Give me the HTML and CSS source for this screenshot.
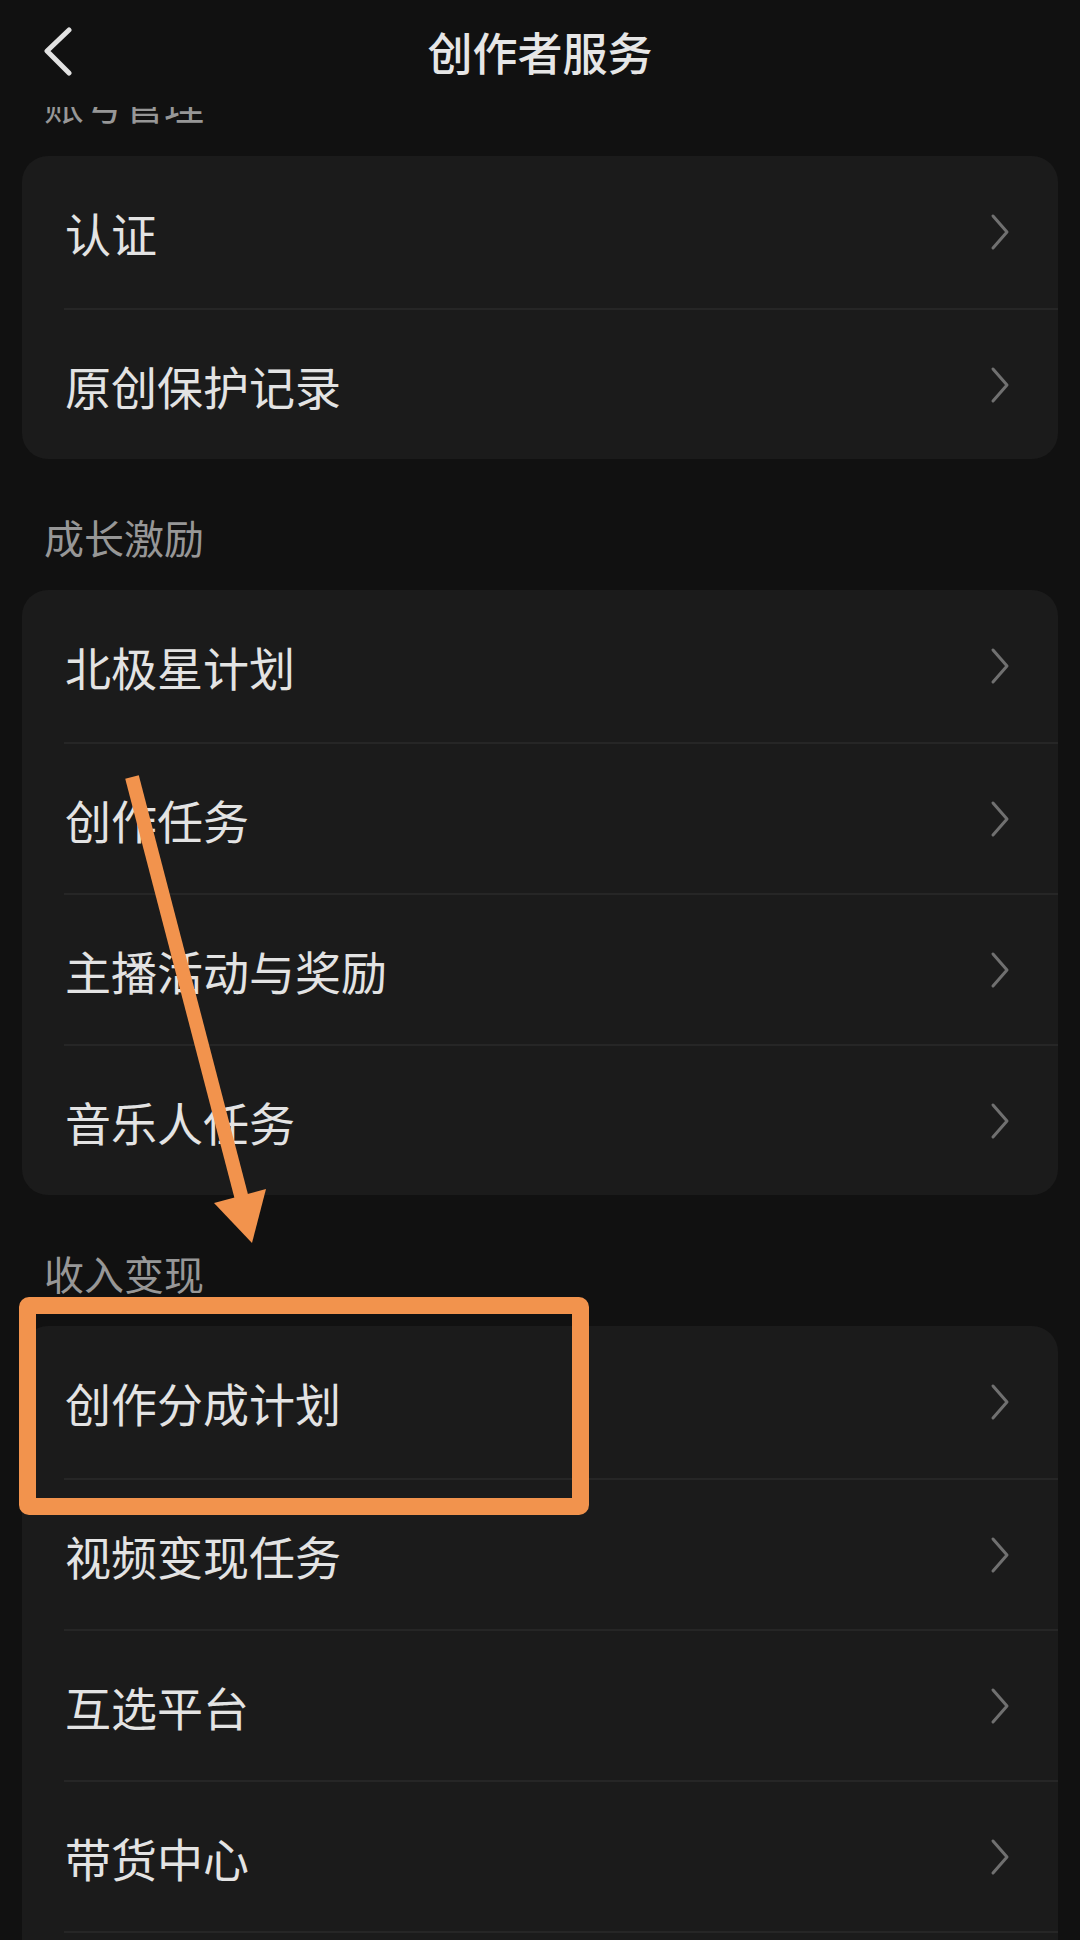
FILE: index.html
```html
<!DOCTYPE html>
<html lang="zh-CN">
<head>
<meta charset="utf-8">
<title>创作者服务</title>
<link rel="stylesheet" href="styles.css">
</head>
<body>
<div class="screen">
  <header class="topbar">
    <div class="back">
      <svg width="34" height="50" viewBox="0 0 34 50"><polyline points="25,3 3,24 25,46" fill="none" stroke="#e2e2e2" stroke-width="5" stroke-linecap="round" stroke-linejoin="round"/></svg>
    </div>
    <h1 class="title">创作者服务</h1>
    <div></div>
  </header>
  <main class="scroll">
    <div class="content">
      <div class="section-label first">账号管理</div>
      <div class="card">
        <div class="row"><span class="row-text">认证</span><svg class="chev" width="20" height="38" viewBox="0 0 20 38"><polyline points="3,3 17,19 3,35" fill="none" stroke="#707070" stroke-width="3" stroke-linecap="round" stroke-linejoin="round"/></svg></div>
        <div class="row"><span class="row-text">原创保护记录</span><svg class="chev" width="20" height="38" viewBox="0 0 20 38"><polyline points="3,3 17,19 3,35" fill="none" stroke="#707070" stroke-width="3" stroke-linecap="round" stroke-linejoin="round"/></svg></div>
      </div>

      <div class="section-label">成长激励</div>
      <div class="card">
        <div class="row"><span class="row-text">北极星计划</span><svg class="chev" width="20" height="38" viewBox="0 0 20 38"><polyline points="3,3 17,19 3,35" fill="none" stroke="#707070" stroke-width="3" stroke-linecap="round" stroke-linejoin="round"/></svg></div>
        <div class="row"><span class="row-text">创作任务</span><svg class="chev" width="20" height="38" viewBox="0 0 20 38"><polyline points="3,3 17,19 3,35" fill="none" stroke="#707070" stroke-width="3" stroke-linecap="round" stroke-linejoin="round"/></svg></div>
        <div class="row"><span class="row-text">主播活动与奖励</span><svg class="chev" width="20" height="38" viewBox="0 0 20 38"><polyline points="3,3 17,19 3,35" fill="none" stroke="#707070" stroke-width="3" stroke-linecap="round" stroke-linejoin="round"/></svg></div>
        <div class="row"><span class="row-text">音乐人任务</span><svg class="chev" width="20" height="38" viewBox="0 0 20 38"><polyline points="3,3 17,19 3,35" fill="none" stroke="#707070" stroke-width="3" stroke-linecap="round" stroke-linejoin="round"/></svg></div>
      </div>

      <div class="section-label">收入变现</div>
      <div class="card">
        <div class="row"><span class="row-text">创作分成计划</span><svg class="chev" width="20" height="38" viewBox="0 0 20 38"><polyline points="3,3 17,19 3,35" fill="none" stroke="#707070" stroke-width="3" stroke-linecap="round" stroke-linejoin="round"/></svg></div>
        <div class="row"><span class="row-text">视频变现任务</span><svg class="chev" width="20" height="38" viewBox="0 0 20 38"><polyline points="3,3 17,19 3,35" fill="none" stroke="#707070" stroke-width="3" stroke-linecap="round" stroke-linejoin="round"/></svg></div>
        <div class="row"><span class="row-text">互选平台</span><svg class="chev" width="20" height="38" viewBox="0 0 20 38"><polyline points="3,3 17,19 3,35" fill="none" stroke="#707070" stroke-width="3" stroke-linecap="round" stroke-linejoin="round"/></svg></div>
        <div class="row"><span class="row-text">带货中心</span><svg class="chev" width="20" height="38" viewBox="0 0 20 38"><polyline points="3,3 17,19 3,35" fill="none" stroke="#707070" stroke-width="3" stroke-linecap="round" stroke-linejoin="round"/></svg></div>
        <div class="row"><span class="row-text"></span></div>
      </div>
    </div>
  </main>

  <div class="annot-box"></div>
  <svg class="annot-arrow" width="1080" height="1940" viewBox="0 0 1080 1940">
    <line x1="132" y1="777" x2="243" y2="1203" stroke="#f2934d" stroke-width="14"/>
    <polygon points="252,1243 214,1203 266,1189" fill="#f2934d"/>
  </svg>
</div>
</body>
</html>
```

FILE: styles.css
```css
* { box-sizing: border-box; }

html, body {
  margin: 0;
  padding: 0;
  background: #111111;
}

body {
  font-family: "Noto Sans CJK SC", "Noto Sans", sans-serif;
  color: #e4e4e4;
}

.screen {
  position: relative;
  width: 1080px;
  height: 1940px;
  overflow: hidden;
  display: flex;
  flex-direction: column;
  background: #111111;
}

.topbar {
  height: 107px;
  flex: 0 0 107px;
  display: grid;
  grid-template-columns: 1fr auto 1fr;
  align-items: center;
  padding-bottom: 4px;
  background: #111111;
  position: relative;
  z-index: 2;
}

.back {
  padding-left: 44px;
  display: flex;
  align-items: center;
}

.back svg { display: block; }

.title {
  margin: 0;
  font-size: 45px;
  line-height: 60px;
  font-weight: 500;
  color: #e6e6e6;
  letter-spacing: 0;
}

.scroll {
  flex: 1 1 auto;
  overflow: hidden;
}

.content {
  margin-top: -30px;
}

.section-label {
  font-size: 40px;
  line-height: 52px;
  color: #979797;
  padding-left: 44px;
  margin: 52px 0 27px;
}

.section-label.first {
  margin-top: 0;
}

.card {
  margin: 0 22px;
  background: #1b1b1b;
  border-radius: 26px;
  overflow: hidden;
}

.row {
  height: 151px;
  margin-left: 42px;
  padding-left: 1px;
  padding-right: 48px;
  display: flex;
  align-items: center;
  justify-content: space-between;
  border-top: 2px solid #262626;
}

.row:first-child {
  height: 152px;
  border-top: none;
}

.row-text {
  font-size: 46px;
  line-height: 60px;
  color: #e3e3e3;
}

.chev { display: block; flex: 0 0 auto; }

.annot-box {
  position: absolute;
  left: 19px;
  top: 1297px;
  width: 570px;
  height: 218px;
  border: 17px solid #f2934d;
  border-radius: 10px;
  z-index: 3;
}

.annot-arrow {
  position: absolute;
  left: 0;
  top: 0;
  z-index: 4;
  pointer-events: none;
}
```
